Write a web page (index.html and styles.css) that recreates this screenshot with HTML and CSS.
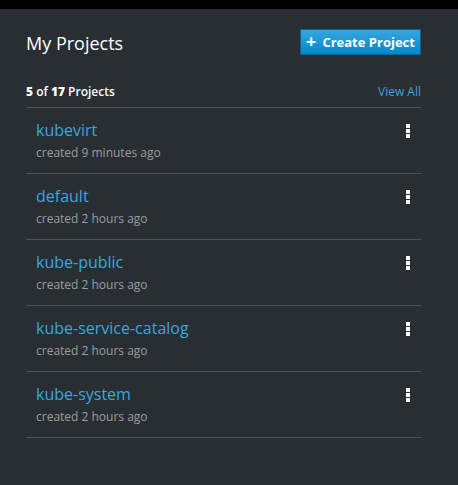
FILE: index.html
```html
<!DOCTYPE html>
<html>
<head>
<meta charset="utf-8">
<link rel="stylesheet" href="styles.css">
</head>
<body>
<div class="topbar"></div>
<main class="panel">
  <header class="head">
    <h1 class="title">My Projects</h1>
    <button class="create"><span class="plus">+</span>Create Project</button>
  </header>
  <div class="summary">
    <span class="count"><b>5</b> of <b>17</b> Projects</span>
    <a class="viewall">View All</a>
  </div>
  <ul class="list">
    <li class="row"><div class="info"><a class="name">kubevirt</a><div class="meta">created 9 minutes ago</div></div><span class="kebab"><i></i><i></i><i></i></span></li>
    <li class="row"><div class="info"><a class="name">default</a><div class="meta">created 2 hours ago</div></div><span class="kebab"><i></i><i></i><i></i></span></li>
    <li class="row"><div class="info"><a class="name">kube-public</a><div class="meta">created 2 hours ago</div></div><span class="kebab"><i></i><i></i><i></i></span></li>
    <li class="row"><div class="info"><a class="name">kube-service-catalog</a><div class="meta">created 2 hours ago</div></div><span class="kebab"><i></i><i></i><i></i></span></li>
    <li class="row"><div class="info"><a class="name">kube-system</a><div class="meta">created 2 hours ago</div></div><span class="kebab"><i></i><i></i><i></i></span></li>
  </ul>
</main>
</body>
</html>
```
FILE: styles.css
```css
html, body {
  margin: 0;
  padding: 0;
  background: #292e33;
  font-family: "Open Sans", "Noto Sans", sans-serif;
  height: 100%;
}
.topbar {
  height: 9px;
  background: #000;
}
.panel {
  width: 395px;
  margin-left: 26px;
}
.head {
  display: flex;
  justify-content: space-between;
  align-items: center;
  margin-top: 20px;
  height: 26px;
}
.title {
  margin: 0;
  font-size: 18px;
  font-weight: 400;
  color: #fff;
  line-height: 26px;
  position: relative;
  top: 1px;
}
.create {
  width: 121px;
  height: 26px;
  box-sizing: border-box;
  border: 1px solid #00659c;
  background: linear-gradient(#39a5dc, #0088ce);
  color: #fff;
  font-family: "Open Sans", sans-serif;
  font-weight: 700;
  font-size: 13px;
  padding: 0;
  display: flex;
  align-items: center;
  justify-content: center;
  border-radius: 1px;
}
.plus {
  font-size: 18px;
  font-weight: 700;
  margin-right: 6px;
  line-height: 1;
  position: relative;
  top: -1px;
}
.summary {
  display: flex;
  justify-content: space-between;
  align-items: center;
  margin-top: 26px;
  height: 20px;
  padding-bottom: 6px;
  border-bottom: 1px solid #4d5258;
  font-size: 12px;
}
.count {
  color: #fff;
  font-weight: 600;
}
.count b { font-weight: 800; }
.viewall {
  color: #39a5dc;
}
.list {
  list-style: none;
  margin: 0;
  padding: 0;
}
.row {
  display: flex;
  justify-content: space-between;
  align-items: flex-start;
  height: 65px;
  border-bottom: 1px solid #4d5258;
  padding-left: 10px;
}
.info {
  padding-top: 11px;
}
.name {
  display: block;
  color: #3aa6de;
  font-size: 16px;
  line-height: 22px;
}
.meta {
  color: #9c9c9c;
  font-size: 12px;
  line-height: 18px;
  margin-top: 3px;
}
.kebab {
  display: flex;
  flex-direction: column;
  gap: 1px;
  margin-top: 16px;
  margin-right: 11px;
}
.kebab i {
  display: block;
  width: 4px;
  height: 4px;
  background: #fff;
}
```
